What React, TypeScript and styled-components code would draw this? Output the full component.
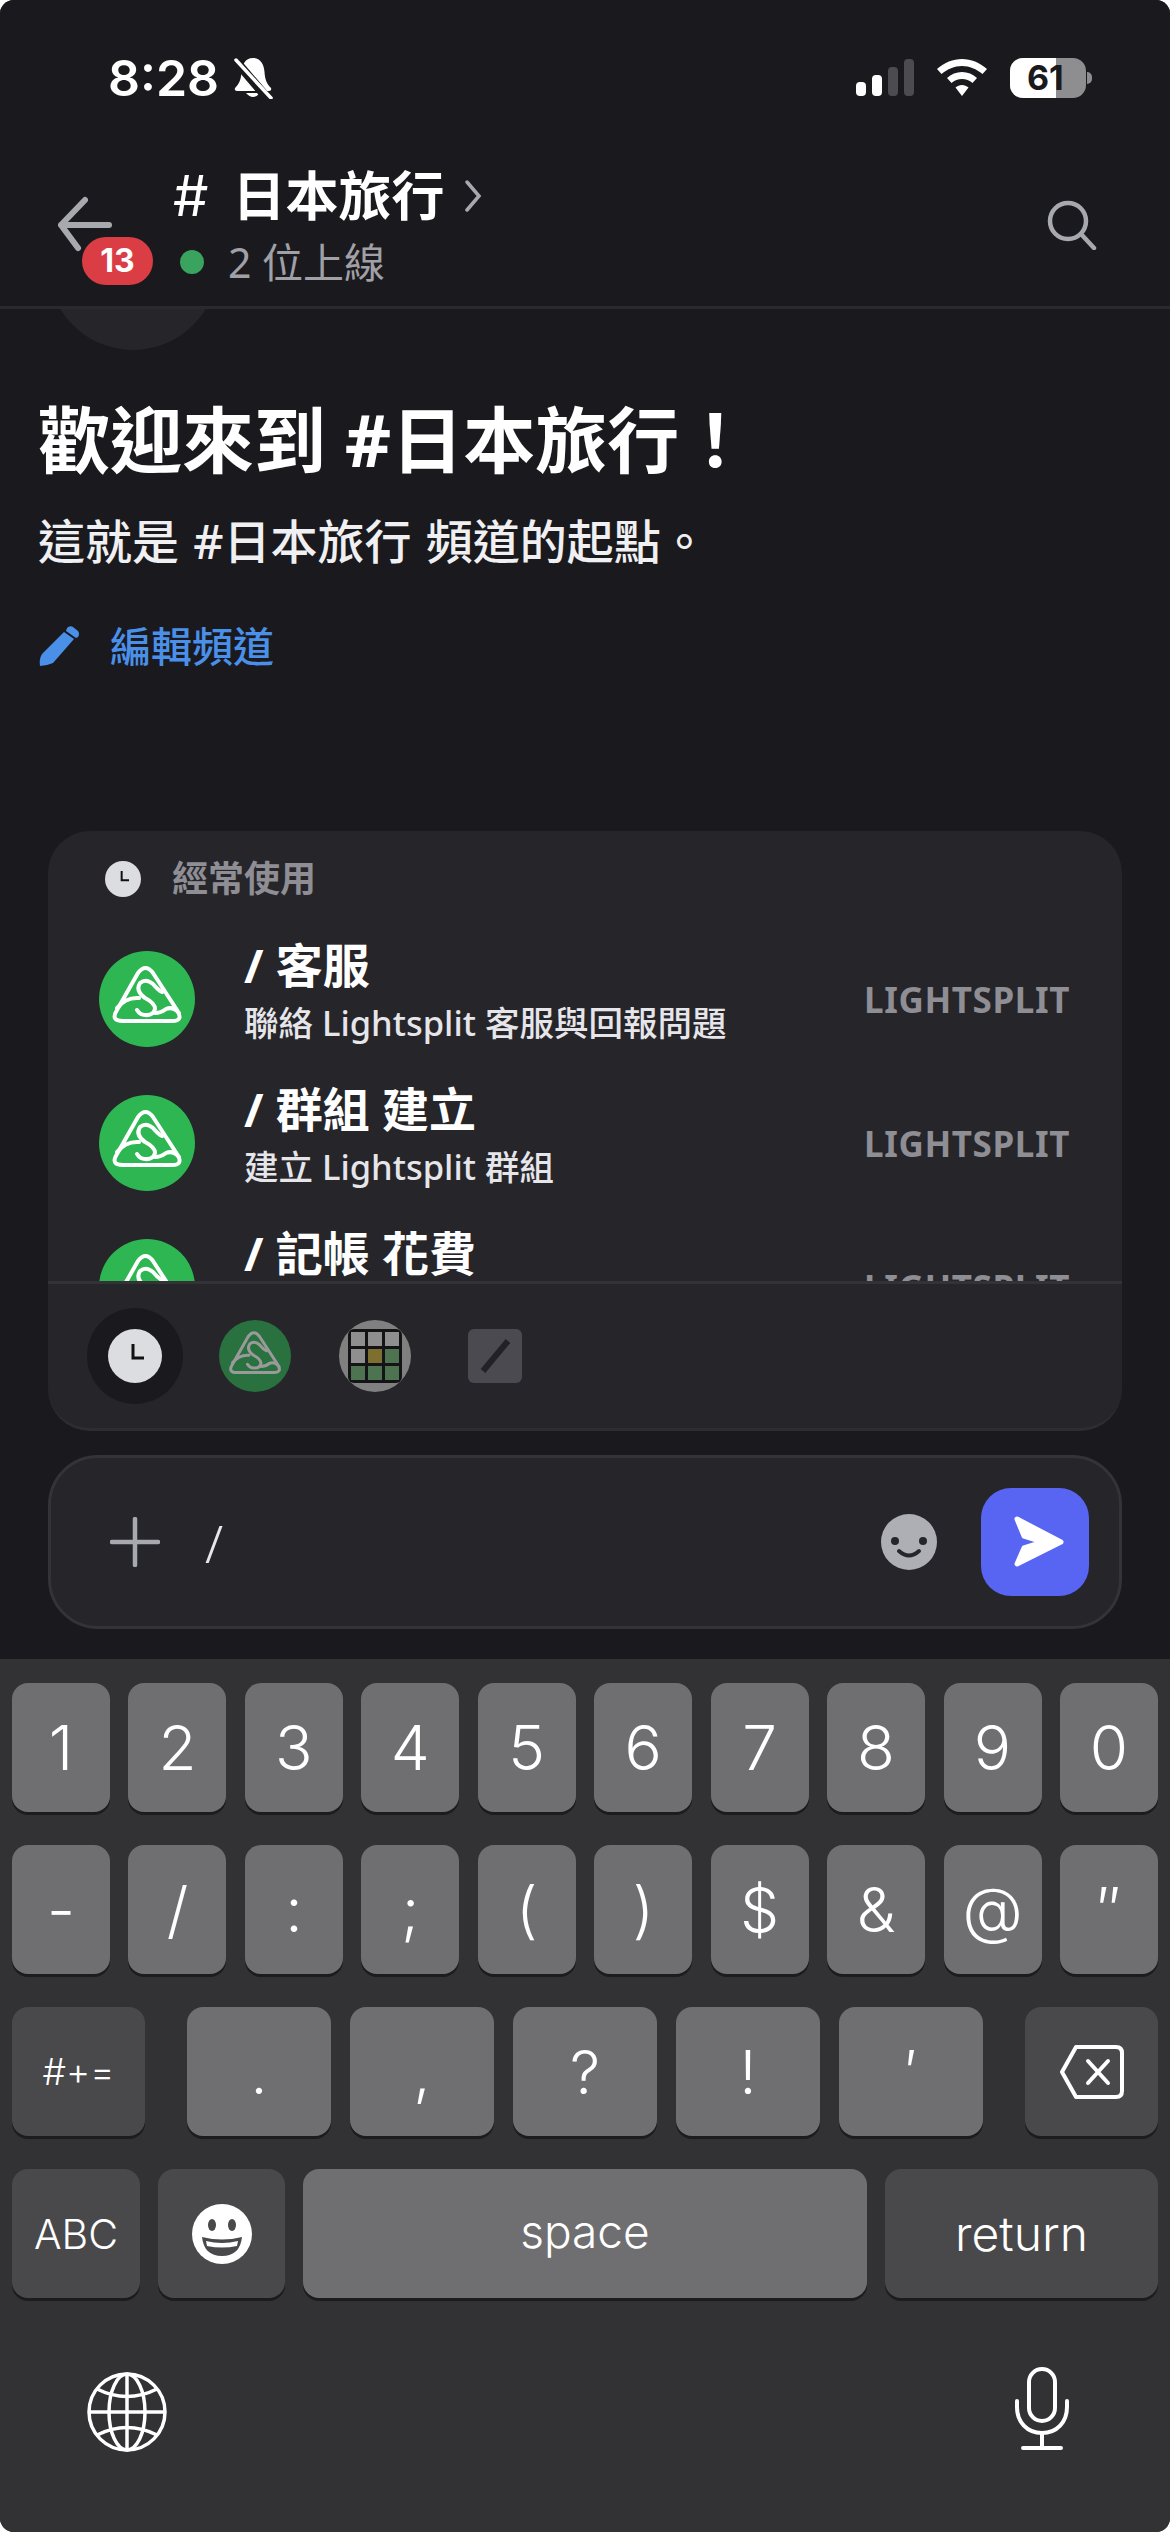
import styled, { createGlobalStyle } from "styled-components";

const CJK = `"Noto Sans", "Noto Sans CJK TC", sans-serif`;
const KEY_FONT = `Inter, "Liberation Sans", sans-serif`;

const GlobalStyle = createGlobalStyle`
  html, body {
    margin: 0;
    padding: 0;
    background: #fff;
  }
  * {
    box-sizing: border-box;
  }
`;

const numberRow = ["1", "2", "3", "4", "5", "6", "7", "8", "9", "0"];
const symbolRow = ["-", "/", ":", ";", "(", ")", "$", "&", "@", "″"];
const punctuationRow = [".", ",", "?", "!", "′"];

const commands = [
  { name: "/ 客服", description: "聯絡 Lightsplit 客服與回報問題" },
  { name: "/ 群組 建立", description: "建立 Lightsplit 群組" },
  { name: "/ 記帳 花費" },
];

const wordleCells = ["g", "g", "g", "g", "y", "v", "v", "v", "v"];

function LightsplitLogo({ size, fill, stroke }: { size: number; fill: string; stroke: string }) {
  return (
    <svg width={size} height={size} viewBox="0 0 96 96" style={{ flexShrink: 0 }}>
      <circle cx="48" cy="48" r="48" fill={fill} />
      <g fill="none" stroke={stroke} strokeWidth="4" strokeLinecap="round" strokeLinejoin="round">
        <path d="M39 22 Q46.5 12 54 22 L78 59 Q85 70 73 70 L24 70 Q11 70 18 59 Z" />
        <path d="M18 57 Q27 46 40 47" />
        <path d="M63 41 Q59 39 54 33 Q47 27 41 32 Q36 40 46 47 Q56 52 56 58 Q54 65 46 64 Q41 64 38 59" />
        <path d="M56 62 Q62 62 67 58 Q74 55 80 62" />
      </g>
    </svg>
  );
}

function ClockIcon({ size }: { size: number }) {
  return (
    <svg width={size} height={size} viewBox="0 0 54 54" style={{ flexShrink: 0 }}>
      <circle cx="27" cy="27" r="27" fill="#dcdde0" />
      <path d="M25 15 V29 H36" fill="none" stroke="#111" strokeWidth="3" />
    </svg>
  );
}

export default function App() {
  return (
    <Stl.Screen>
      <GlobalStyle />
      <Stl.StatusBar>
        <Stl.StatusLeft>
          <Stl.Time>8:28</Stl.Time>
          <svg width="40" height="42" viewBox="0 0 40 42">
            <path
              d="M20 1 C12 1 9 8 8.500 15 C8 23 6 27 2 31 Q1 34 4 34 H36 Q39 34 38 31 C34 27 32 23 31.500 15 C31 8 28 1 20 1 Z"
              fill="#fff"
            />
            <path d="M13 36 Q20 44 27 36 Z" fill="#fff" />
            <path d="M1 2 L35 42" stroke="#1a1a1e" strokeWidth="9" />
            <path d="M3 3 L38 41" stroke="#fff" strokeWidth="3.500" strokeLinecap="round" />
          </svg>
        </Stl.StatusLeft>
        <Stl.StatusRight>
          <Stl.Signal>
            <Stl.SignalBar $height={14} $on />
            <Stl.SignalBar $height={21} $on />
            <Stl.SignalBar $height={29} />
            <Stl.SignalBar $height={37} />
          </Stl.Signal>
          <svg width="50" height="37" viewBox="0 0 50 37">
            <path
              d="M25 0 C34 0 42.500 3.500 50 10 L45.500 15 C39.500 10 32.500 7 25 7 C17.500 7 10.500 10 4.500 15 L0 10 C7.500 3.500 16 0 25 0 Z M25 13 C30.500 13 36 15 40 19 L35.500 24 C32.500 21.500 29 20 25 20 C21 20 17.500 21.500 14.500 24 L10 19 C14 15 19.500 13 25 13 Z M25 26 C27.500 26 29.500 27 31.500 28.500 L25 37 L18.500 28.500 C20.500 27 22.500 26 25 26 Z"
              fill="#fff"
            />
          </svg>
          <Stl.Battery>
            <Stl.BatteryFill />
            <Stl.BatteryLabel>61</Stl.BatteryLabel>
            <Stl.BatteryNub />
          </Stl.Battery>
        </Stl.StatusRight>
      </Stl.StatusBar>

      <Stl.Header>
        <Stl.BackWrap>
          <svg width="54" height="56" viewBox="0 0 54 56">
            <path
              d="M27 4 L3 29 L20 52 M3 29 H51"
              fill="none"
              stroke="#a8a9ae"
              strokeWidth="6"
              strokeLinecap="round"
              strokeLinejoin="round"
            />
          </svg>
          <Stl.Badge>13</Stl.Badge>
        </Stl.BackWrap>
        <Stl.TitleCol>
          <Stl.ChannelTitle>
            <Stl.Hash>#</Stl.Hash>日本旅行
            <svg width="18" height="32" viewBox="0 0 18 32">
              <path d="M3 2 L15 16 L3 30" fill="none" stroke="#a8a9ae" strokeWidth="3.500" strokeLinecap="round" />
            </svg>
          </Stl.ChannelTitle>
          <Stl.Online>
            <Stl.OnlineDot />2 位上線
          </Stl.Online>
        </Stl.TitleCol>
        <Stl.SearchIcon width="50" height="50" viewBox="0 0 50 50">
          <circle cx="21" cy="21" r="18" fill="none" stroke="#a8a9ae" strokeWidth="4.500" />
          <path d="M34 34 L47 48" stroke="#a8a9ae" strokeWidth="4.500" strokeLinecap="round" />
        </Stl.SearchIcon>
      </Stl.Header>

      <Stl.Welcome>
        <Stl.ChannelAvatar />
        <Stl.WelcomeTitle>歡迎來到 #日本旅行！</Stl.WelcomeTitle>
        <Stl.WelcomeText>這就是 #日本旅行 頻道的起點。</Stl.WelcomeText>
        <Stl.EditLink>
          <svg width="42" height="42" viewBox="0 0 42 42">
            <path d="M26 7 L36 14 L15 38 Q8 41 2 41 Q1 34 4 29 Z" fill="#4a90e8" />
            <path d="M29 3 Q32 0 35 2 L40 6 Q42 9 40 12 L38 13 L28 6 Z" fill="#4a90e8" />
          </svg>
          編輯頻道
        </Stl.EditLink>
      </Stl.Welcome>

      <Stl.Card>
        <Stl.CardScroll>
          <Stl.CardHeading>
            <ClockIcon size={36} />
            經常使用
          </Stl.CardHeading>
          {commands.map((item) => (
            <Stl.CommandRow key={item.name}>
              <LightsplitLogo size={96} fill="#2db652" stroke="#fff" />
              <Stl.CommandText>
                <Stl.CommandName>{item.name}</Stl.CommandName>
                {item.description && <Stl.CommandDescription>{item.description}</Stl.CommandDescription>}
              </Stl.CommandText>
              <Stl.CommandSource>LIGHTSPLIT</Stl.CommandSource>
            </Stl.CommandRow>
          ))}
        </Stl.CardScroll>
        <Stl.CardTabs>
          <Stl.ActiveTab>
            <ClockIcon size={54} />
          </Stl.ActiveTab>
          <LightsplitLogo size={72} fill="#29713f" stroke="#9a9a9a" />
          <Stl.WordleIcon>
            <Stl.WordleBoard>
              {wordleCells.map((cell, i) => (
                <Stl.WordleCell key={i} $kind={cell} />
              ))}
            </Stl.WordleBoard>
          </Stl.WordleIcon>
          <Stl.SlashTab>
            <svg width="30" height="34" viewBox="0 0 30 34">
              <path d="M28 2 L3 32" stroke="#222226" strokeWidth="6" />
            </svg>
          </Stl.SlashTab>
        </Stl.CardTabs>
      </Stl.Card>

      <Stl.InputBar>
        <svg width="50" height="50" viewBox="0 0 50 50">
          <path d="M25 2 V48 M2 25 H48" stroke="#a8a9ae" strokeWidth="4.500" strokeLinecap="round" />
        </svg>
        <Stl.InputText>/</Stl.InputText>
        <svg width="56" height="56" viewBox="0 0 56 56">
          <circle cx="28" cy="28" r="28" fill="#aeafb4" />
          <circle cx="14" cy="27" r="4" fill="#25252a" />
          <circle cx="42" cy="27" r="4" fill="#25252a" />
          <path d="M18 37 Q28 46 38 37" fill="none" stroke="#25252a" strokeWidth="4" strokeLinecap="round" />
        </svg>
        <Stl.SendButton>
          <svg width="108" height="108" viewBox="0 0 108 108">
            <path
              d="M36 31 L80 54 L36 76 L43 60 L62 54 L43 48 Z"
              fill="#fff"
              stroke="#fff"
              strokeWidth="5"
              strokeLinejoin="round"
            />
          </svg>
        </Stl.SendButton>
      </Stl.InputBar>

      <Stl.Keyboard>
        <Stl.KeyRow>
          {numberRow.map((key) => (
            <Stl.Key key={key}>{key}</Stl.Key>
          ))}
        </Stl.KeyRow>
        <Stl.KeyRow>
          {symbolRow.map((key) => (
            <Stl.Key key={key}>{key}</Stl.Key>
          ))}
        </Stl.KeyRow>
        <Stl.KeyRow>
          <Stl.Key $width={133} $dark $size={37}>
            #+=
          </Stl.Key>
          <Stl.PunctuationGroup>
            {punctuationRow.map((key) => (
              <Stl.Key key={key} $width={144} $size={60}>
                {key}
              </Stl.Key>
            ))}
          </Stl.PunctuationGroup>
          <Stl.Key $width={133} $dark>
            <svg width="64" height="54" viewBox="0 0 64 54">
              <path
                d="M16 2 H56 Q62 2 62 8 V46 Q62 52 56 52 H16 L2 27 Z"
                fill="none"
                stroke="#fff"
                strokeWidth="4"
                strokeLinejoin="round"
              />
              <path d="M28 16 L48 38 M48 16 L28 38" stroke="#fff" strokeWidth="4" strokeLinecap="round" />
            </svg>
          </Stl.Key>
        </Stl.KeyRow>
        <Stl.KeyRow>
          <Stl.Key $width={128} $dark $size={41}>
            ABC
          </Stl.Key>
          <Stl.Key $width={127} $dark>
            <svg width="60" height="60" viewBox="0 0 60 60">
              <circle cx="30" cy="30" r="30" fill="#fff" />
              <ellipse cx="20" cy="21" rx="4" ry="6" fill="#49494b" />
              <ellipse cx="40" cy="21" rx="4" ry="6" fill="#49494b" />
              <path d="M10 33 Q30 38 50 33 Q48 52 30 52 Q12 52 10 33 Z" fill="#49494b" />
              <path d="M14 37 Q30 41 46 37 L45 42 Q30 45 15 42 Z" fill="#fff" />
            </svg>
          </Stl.Key>
          <Stl.SpaceKey $width={564} $size={46}>
            <span>space</span>
          </Stl.SpaceKey>
          <Stl.Key $width={273} $dark $size={48}>
            return
          </Stl.Key>
        </Stl.KeyRow>
        <Stl.KeyboardFooter>
          <Stl.GlobeIcon width="80" height="80" viewBox="0 0 80 80">
            <g fill="none" stroke="#fff" strokeWidth="3.500">
              <circle cx="40" cy="40" r="38" />
              <ellipse cx="40" cy="40" rx="18" ry="38" />
              <path d="M40 2 V78 M2 40 H78" />
              <path d="M10 17 Q40 32 70 17 M10 63 Q40 48 70 63" />
            </g>
          </Stl.GlobeIcon>
          <svg width="56" height="84" viewBox="0 0 56 84">
            <g fill="none" stroke="#fff" strokeWidth="4" strokeLinecap="round">
              <rect x="15" y="2" width="26" height="52" rx="13" />
              <path d="M3 34 V40 C3 55 13 66 28 66 C43 66 53 55 53 40 V34" />
              <path d="M28 66 V81 M9 81 H47" />
            </g>
          </svg>
        </Stl.KeyboardFooter>
      </Stl.Keyboard>
    </Stl.Screen>
  );
}

const cellColors: Record<string, string> = {
  g: "#8f8f90",
  y: "#7d6f30",
  v: "#4e7350",
};

const Key = styled.div<{ $width?: number; $dark?: boolean; $size?: number }>`
  width: ${({ $width }) => $width ?? 98}px;
  height: 129px;
  border-radius: 16px;
  background: ${({ $dark }) => ($dark ? "#49494b" : "#6f6f71")};
  box-shadow: 0 3px 0 #1c1c1e;
  display: flex;
  align-items: center;
  justify-content: center;
  font-size: ${({ $size }) => $size ?? 62}px;
  font-weight: 300;
  color: #fff;
`;

const Stl = {
  Screen: styled.div`
    width: 1170px;
    height: 2532px;
    background: #1a1a1e;
    border-radius: 14px;
    overflow: hidden;
    display: flex;
    flex-direction: column;
    font-family: ${CJK};
    color: #fff;
  `,
  StatusBar: styled.div`
    height: 120px;
    flex-shrink: 0;
    display: flex;
    justify-content: space-between;
    align-items: flex-start;
    padding: 57px 79px 0 108px;
    position: relative;
    z-index: 2;
    background: #1a1a1e;
  `,
  StatusLeft: styled.div`
    display: flex;
    align-items: center;
    gap: 14px;
    height: 42px;
  `,
  Time: styled.span`
    font-family: Inter, sans-serif;
    font-size: 50px;
    font-weight: 600;
    line-height: 42px;
  `,
  StatusRight: styled.div`
    display: flex;
    align-items: center;
    gap: 23px;
    height: 41px;
  `,
  Signal: styled.div`
    display: flex;
    align-items: flex-end;
    gap: 6px;
    height: 37px;
  `,
  SignalBar: styled.div<{ $height: number; $on?: boolean }>`
    width: 10px;
    height: ${({ $height }) => $height}px;
    border-radius: 4px;
    background: ${({ $on }) => ($on ? "#fff" : "#4c4c50")};
  `,
  Battery: styled.div`
    position: relative;
    width: 76px;
    height: 40px;
    border-radius: 13px;
    background: #8e8e90;
    margin-right: 5px;
  `,
  BatteryFill: styled.div`
    position: absolute;
    left: 0;
    top: 0;
    bottom: 0;
    width: 46px;
    border-radius: 13px 0 0 13px;
    background: #fff;
  `,
  BatteryLabel: styled.span`
    position: absolute;
    left: 17px;
    top: 0;
    font-family: Inter, sans-serif;
    font-size: 34px;
    font-weight: 700;
    line-height: 40px;
    color: #1a1a1e;
  `,
  BatteryNub: styled.div`
    position: absolute;
    right: -6px;
    top: 14px;
    width: 5px;
    height: 12px;
    border-radius: 0 6px 6px 0;
    background: #8e8e90;
  `,
  Header: styled.div`
    height: 189px;
    flex-shrink: 0;
    display: flex;
    align-items: flex-start;
    padding-left: 58px;
    padding-right: 73px;
    border-bottom: 3px solid #2a2a2e;
    background: #1a1a1e;
    position: relative;
    z-index: 1;
  `,
  BackWrap: styled.div`
    position: relative;
    width: 115px;
    height: 56px;
    margin-top: 76px;
    flex-shrink: 0;
  `,
  Badge: styled.div`
    position: absolute;
    left: 24px;
    top: 41px;
    width: 71px;
    height: 48px;
    border-radius: 24px;
    background: #da3e44;
    font-family: Inter, sans-serif;
    font-size: 32px;
    font-weight: 700;
    line-height: 48px;
    text-align: center;
  `,
  TitleCol: styled.div`
    display: flex;
    flex-direction: column;
    gap: 12px;
    margin-top: 46px;
    flex: 1;
  `,
  ChannelTitle: styled.div`
    display: flex;
    align-items: center;
    height: 60px;
    font-size: 53px;
    font-weight: 700;
    line-height: 60px;
    svg {
      margin-left: 20px;
    }
  `,
  Hash: styled.span`
    font-family: Inter, sans-serif;
    font-size: 56px;
    font-weight: 400;
    margin-right: 24px;
  `,
  Online: styled.div`
    display: flex;
    align-items: center;
    height: 48px;
    font-size: 41px;
    line-height: 48px;
    color: #a0a0a6;
  `,
  OnlineDot: styled.span`
    width: 24px;
    height: 24px;
    border-radius: 50%;
    background: #3aa45f;
    margin: 0 24px 0 7px;
  `,
  SearchIcon: styled.svg`
    margin-top: 80px;
    flex-shrink: 0;
  `,
  Welcome: styled.div`
    padding-left: 38px;
    display: flex;
    flex-direction: column;
    align-items: flex-start;
  `,
  ChannelAvatar: styled.div`
    width: 170px;
    height: 170px;
    border-radius: 50%;
    background: #25252a;
    margin: -129px 0 0 10px;
  `,
  WelcomeTitle: styled.h1`
    margin: 45px 0 0;
    font-size: 72px;
    font-weight: 700;
    line-height: 88px;
    white-space: nowrap;
  `,
  WelcomeText: styled.p`
    margin: 28px 0 0;
    font-size: 47px;
    font-weight: 500;
    line-height: 60px;
    word-spacing: 2px;
    color: #f0f0f2;
    white-space: nowrap;
  `,
  EditLink: styled.div`
    margin-top: 50px;
    display: flex;
    align-items: center;
    gap: 30px;
    font-size: 41px;
    font-weight: 500;
    line-height: 50px;
    color: #4a90e8;
  `,
  Card: styled.div`
    margin: auto 48px 0;
    height: 600px;
    flex-shrink: 0;
    display: flex;
    flex-direction: column;
    background: #25252a;
    border-radius: 42px;
    border-bottom: 3px solid #2d2d32;
    overflow: hidden;
  `,
  CardScroll: styled.div`
    height: 450px;
    flex-shrink: 0;
    overflow: hidden;
    padding: 30px 52px 0 51px;
  `,
  CardHeading: styled.div`
    display: flex;
    align-items: center;
    gap: 31px;
    height: 36px;
    padding-left: 6px;
    margin-bottom: 54px;
    font-size: 36px;
    line-height: 30px;
    font-weight: 600;
    color: #8e8e94;
  `,
  CommandRow: styled.div`
    display: flex;
    align-items: center;
    height: 96px;
    margin-bottom: 48px;
  `,
  CommandText: styled.div`
    margin-left: 49px;
    flex: 1;
    align-self: flex-start;
    display: flex;
    flex-direction: column;
    gap: 8px;
    margin-top: -14px;
  `,
  CommandName: styled.div`
    font-size: 47px;
    font-weight: 700;
    line-height: 56px;
  `,
  CommandDescription: styled.div`
    font-size: 34.5px;
    font-weight: 500;
    line-height: 44px;
    white-space: nowrap;
    color: #e6e6ea;
  `,
  CommandSource: styled.div`
    font-size: 35px;
    font-weight: 700;
    color: #8e8e94;
    letter-spacing: 0.6px;
  `,
  CardTabs: styled.div`
    flex: 1;
    border-top: 3px solid #323237;
    display: flex;
    align-items: center;
    padding-left: 39px;
    gap: 36px;
  `,
  ActiveTab: styled.div`
    width: 96px;
    height: 96px;
    border-radius: 50%;
    background: #1a1a1e;
    display: flex;
    align-items: center;
    justify-content: center;
  `,
  WordleIcon: styled.div`
    width: 72px;
    height: 72px;
    margin-left: 12px;
    border-radius: 50%;
    background: #808080;
    display: flex;
    align-items: center;
    justify-content: center;
  `,
  WordleBoard: styled.div`
    width: 54px;
    height: 54px;
    padding: 3px;
    border-radius: 6px;
    background: #141416;
    display: grid;
    grid-template-columns: repeat(3, 1fr);
    gap: 3px;
  `,
  WordleCell: styled.div<{ $kind: string }>`
    background: ${({ $kind }) => cellColors[$kind]};
  `,
  SlashTab: styled.div`
    width: 54px;
    height: 54px;
    margin-left: 21px;
    border-radius: 6px;
    background: #4a4a50;
    display: flex;
    align-items: center;
    justify-content: center;
  `,
  InputBar: styled.div`
    margin: 24px 48px 0;
    height: 174px;
    flex-shrink: 0;
    display: flex;
    align-items: center;
    padding: 0 30px 0 59px;
    background: #25252a;
    border: 3px solid #333338;
    border-radius: 50px;
  `,
  InputText: styled.span`
    flex: 1;
    margin-left: 45px;
    font-size: 52px;
    font-weight: 300;
    color: #e8e8ea;
  `,
  SendButton: styled.div`
    width: 108px;
    height: 108px;
    margin-left: 44px;
    border-radius: 30px;
    background: #5865f2;
  `,
  Keyboard: styled.div`
    margin-top: 30px;
    height: 873px;
    flex-shrink: 0;
    background: #323234;
    padding: 24px 12px 0;
    display: flex;
    flex-direction: column;
    gap: 33px;
    font-family: ${KEY_FONT};
  `,
  KeyRow: styled.div`
    display: flex;
    justify-content: space-between;
  `,
  PunctuationGroup: styled.div`
    display: flex;
    gap: 19px;
  `,
  Key,
  SpaceKey: styled(Key)`
    span {
      margin-top: -6px;
    }
  `,
  KeyboardFooter: styled.div`
    display: flex;
    justify-content: space-between;
    align-items: flex-start;
    margin-top: 36px;
    padding: 0 88px 0 75px;
  `,
  GlobeIcon: styled.svg`
    margin-top: 5px;
  `,
};
